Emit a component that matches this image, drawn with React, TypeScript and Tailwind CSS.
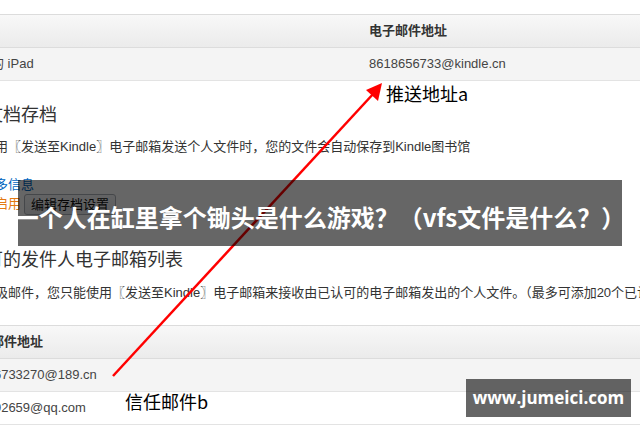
import React from "react";

const body = { fontFamily: '"Liberation Sans", "Noto Sans CJK SC", Arial, sans-serif' };
const cjk = { fontFamily: '"Noto Sans CJK SC", "Liberation Sans", sans-serif' };

// first table: device list with kindle address
const devices = [{ name: "小明的 iPad", email: "8618656733@kindle.cn" }];

// approved sender list
const senders = ["18606733270@189.cn", "357892659@qq.com"];

const HeaderRow: React.FC<{ children: React.ReactNode }> = ({ children }) => (
  <div className="h-[34px] border-y border-[#dcdcdc] bg-gradient-to-b from-[#f8f8f8] to-[#ebebeb] flex items-center text-[13px] font-bold text-[#333]">
    {children}
  </div>
);

const App: React.FC = () => {
  return (
    <div className="relative w-[640px] h-[426px] overflow-hidden bg-white text-[#333]" style={body}>
      {/* page content, cropped on the left */}
      <div className="ml-[-51px] w-[760px] pt-[14px] whitespace-nowrap">
        {/* devices table */}
        <HeaderRow>
          <div className="w-[404px] pl-4"></div>
          <div className="pl-4">电子邮件地址</div>
        </HeaderRow>
        {devices.map((d) => (
          <div key={d.email} className="h-[33px] border-b border-[#e3e3e3] bg-[#f4f4f4] flex items-center text-[13px] text-[#444]">
            <div className="w-[404px] pl-4">{d.name}</div>
            <div className="pl-4">{d.email}</div>
          </div>
        ))}

        {/* archive section */}
        <h2 className="mt-[20px] h-[24px] leading-[24px] text-[18px] font-normal text-[#333]" style={cjk}>
          个人文档存档
        </h2>
        <p className="mt-[12px] pl-[7px] leading-[20px] text-[13px]">
          当您使用〖发送至Kindle〗电子邮箱发送个人文件时，您的文件会自动保存到Kindle图书馆
        </p>
        <div className="mt-[20px] pl-[7px] leading-[16px] text-[13px] text-[#0066c0]">了解更多信息</div>
        <div className="h-[22px] flex items-center pl-[33px] text-[13px]">
          <span className="text-[#e47911]">已启用</span>
          <button className="ml-[3px] h-[21px] px-[6px] rounded-[3px] border border-[#adb1b8] bg-gradient-to-b from-[#f7f8fa] to-[#e7e9ec] text-[13px] text-[#111] leading-none">
            编辑存档设置
          </button>
        </div>

        {/* approved senders section */}
        <h2 className="mt-[31px] h-[24px] leading-[24px] text-[18px] font-normal text-[#333]" style={cjk}>
          已认可的发件人电子邮箱列表
        </h2>
        <p className="mt-[13px] pl-[7px] leading-[20px] text-[13px]">
          防止垃圾邮件，您只能使用〖发送至Kindle〗电子邮箱来接收由已认可的电子邮箱发出的个人文件。（最多可添加20个已认可的电子邮箱）
        </p>
        <div className="mt-[22px]">
          <HeaderRow>
            <div className="pl-4">电子邮件地址</div>
          </HeaderRow>
          {senders.map((s, i) => (
            <div
              key={s}
              className={`h-[33px] border-b border-[#e3e3e3] flex items-center text-[13px] text-[#444] ${
                i % 2 === 0 ? "bg-[#f4f4f4]" : "bg-white"
              }`}
            >
              <div className="pl-4">{s}</div>
            </div>
          ))}
        </div>
      </div>

      {/* red annotation arrow */}
      <svg className="absolute left-0 top-0 pointer-events-none" width="640" height="426">
        <line x1="113" y1="376" x2="374" y2="93" stroke="#ff0000" strokeWidth="2.5" />
        <polygon points="382,83 378,101 366,90" fill="#ff0000" />
      </svg>
      <div className="absolute left-[386px] top-[82px] text-[18px] leading-[22px] text-black" style={cjk}>
        推送地址a
      </div>
      <div className="absolute left-[125px] top-[390px] text-[18px] leading-[22px] text-black" style={cjk}>
        信任邮件b
      </div>

      {/* title banner */}
      <div className="absolute left-[18px] top-[180px] w-[604px] h-[66px] bg-black/60 flex items-center justify-center">
        <span className="text-white text-[24px] font-bold whitespace-nowrap mt-[8px]" style={cjk}>
          一个人在缸里拿个锄头是什么游戏？（vfs文件是什么？）
        </span>
      </div>

      {/* watermark */}
      <div className="absolute left-[466px] top-[379px] w-[165px] h-[38px] bg-black/60 flex items-center justify-center">
        <span className="text-white text-[17px] font-bold" style={{ fontFamily: '"Open Sans", "Noto Sans", sans-serif' }}>
          www.jumeici.com
        </span>
      </div>
    </div>
  );
};

export default App;
